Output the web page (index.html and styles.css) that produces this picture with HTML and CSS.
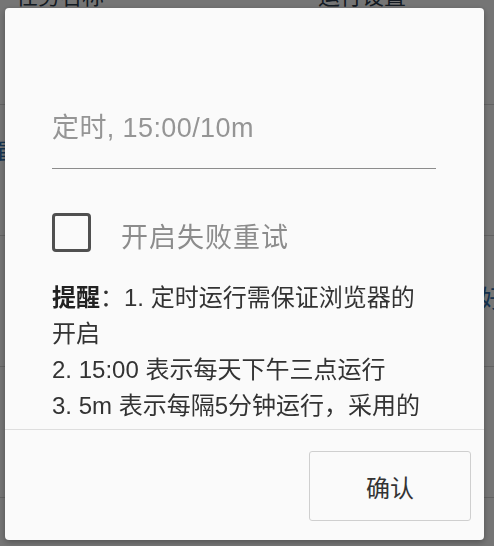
FILE: index.html
```html
<!DOCTYPE html>
<html lang="zh-CN">
<head>
<meta charset="utf-8">
<title>定时设置</title>
<link rel="stylesheet" href="styles.css">
</head>
<body>
<div class="page">
  <div class="row row-first">
    <span class="cell-text">任务名称</span>
    <span class="cell-text cell-right">运行设置</span>
  </div>
  <div class="row row-mid">
    <span class="link-text left-link">编辑</span>
  </div>
  <div class="row row-mid">
    <span class="link-text right-link">好</span>
  </div>
  <div class="row"></div>
</div>

<div class="overlay">
  <div class="dialog">
    <div class="dialog-body">
      <input class="time-input" type="text" placeholder="定时, 15:00/10m">
      <label class="check-row">
        <span class="checkbox"></span>
        <span class="check-label">开启失败重试</span>
      </label>
      <div class="reminder">
        <strong>提醒</strong>：1. 定时运行需保证浏览器的开启<br>
        2. 15:00 表示每天下午三点运行<br>
        3. 5m 表示每隔5分钟运行，采用的是相对时间，从浏览器启动时开始计算
      </div>
    </div>
    <div class="dialog-footer">
      <button class="btn" type="button">确认</button>
    </div>
  </div>
</div>
</body>
</html>
```

FILE: styles.css
```css
html, body {
  margin: 0;
  padding: 0;
  height: 100%;
}

body {
  background: #ffffff;
  font-family: "Liberation Sans", "Noto Sans CJK SC", sans-serif;
  overflow: hidden;
}

.page {
  display: flex;
  flex-direction: column;
}

.row {
  height: 130px;
  border-bottom: 1px solid #d8d8d8;
  display: flex;
  align-items: center;
  justify-content: space-between;
  padding: 0 4px;
}

.row-first {
  height: 104px;
  align-items: flex-start;
}

.cell-text {
  font-size: 22px;
  line-height: 22px;
  margin-top: -14px;
  color: #2a3a4a;
  margin-left: 12px;
}

.cell-right {
  margin-left: 0;
  margin-right: 84px;
}

.link-text {
  color: #2f6fb0;
  font-size: 24px;
}

.left-link {
  margin-left: -40px;
  margin-top: -40px;
}

.right-link {
  margin-left: auto;
  margin-right: -14px;
  margin-top: -10px;
}

.overlay {
  position: fixed;
  inset: 0;
  background: rgba(0, 0, 0, 0.54);
  display: flex;
  padding: 8px 10px 6px 5px;
  box-sizing: border-box;
}

.dialog {
  flex: 1;
  display: flex;
  flex-direction: column;
  background: #fafafa;
  border-radius: 4px;
  box-shadow: 0 2px 6px rgba(0, 0, 0, 0.3);
  overflow: hidden;
}

.dialog-body {
  flex: 1;
  min-height: 0;
  overflow: hidden;
  padding: 96px 48px 0 47px;
  display: flex;
  flex-direction: column;
}

.time-input {
  display: block;
  width: 100%;
  box-sizing: border-box;
  border: none;
  border-bottom: 1px solid #8c8c8c;
  background: transparent;
  padding: 0 0 16px 0;
  margin: 0;
  height: 65px;
  font-family: "Liberation Sans", "Noto Sans CJK SC", sans-serif;
  font-size: 27px;
  letter-spacing: 0.4px;
  line-height: 48px;
  color: #333;
  outline: none;
  flex-shrink: 0;
}

.time-input::placeholder {
  color: #959595;
}

.check-row {
  display: flex;
  align-items: center;
  margin-top: 44px;
  height: 39px;
  flex-shrink: 0;
}

.checkbox {
  width: 39px;
  height: 39px;
  box-sizing: border-box;
  border: 3px solid #505050;
  border-radius: 4px;
  background: #fafafa;
  flex-shrink: 0;
}

.check-label {
  margin-left: 30px;
  font-family: "Liberation Sans", "Noto Sans CJK SC", sans-serif;
  font-size: 27px;
  letter-spacing: 1px;
  line-height: 27px;
  padding-top: 11px;
  color: #8c8c8c;
}

.reminder {
  margin-top: 28px;
  font-size: 24px;
  line-height: 36px;
  color: #333333;
  flex-shrink: 0;
}

.reminder strong {
  font-weight: 700;
  color: #222;
}

.dialog-footer {
  flex-shrink: 0;
  border-top: 1px solid #dedede;
  padding: 21px 13px 19px 0;
  display: flex;
  justify-content: flex-end;
}

.btn {
  width: 162px;
  height: 70px;
  border: 1px solid #cfcfcf;
  border-radius: 3px;
  background: #fafafa;
  font-family: "Liberation Sans", "Noto Sans CJK SC", sans-serif;
  font-size: 24px;
  color: #333333;
  padding: 0;
  cursor: pointer;
}
```
